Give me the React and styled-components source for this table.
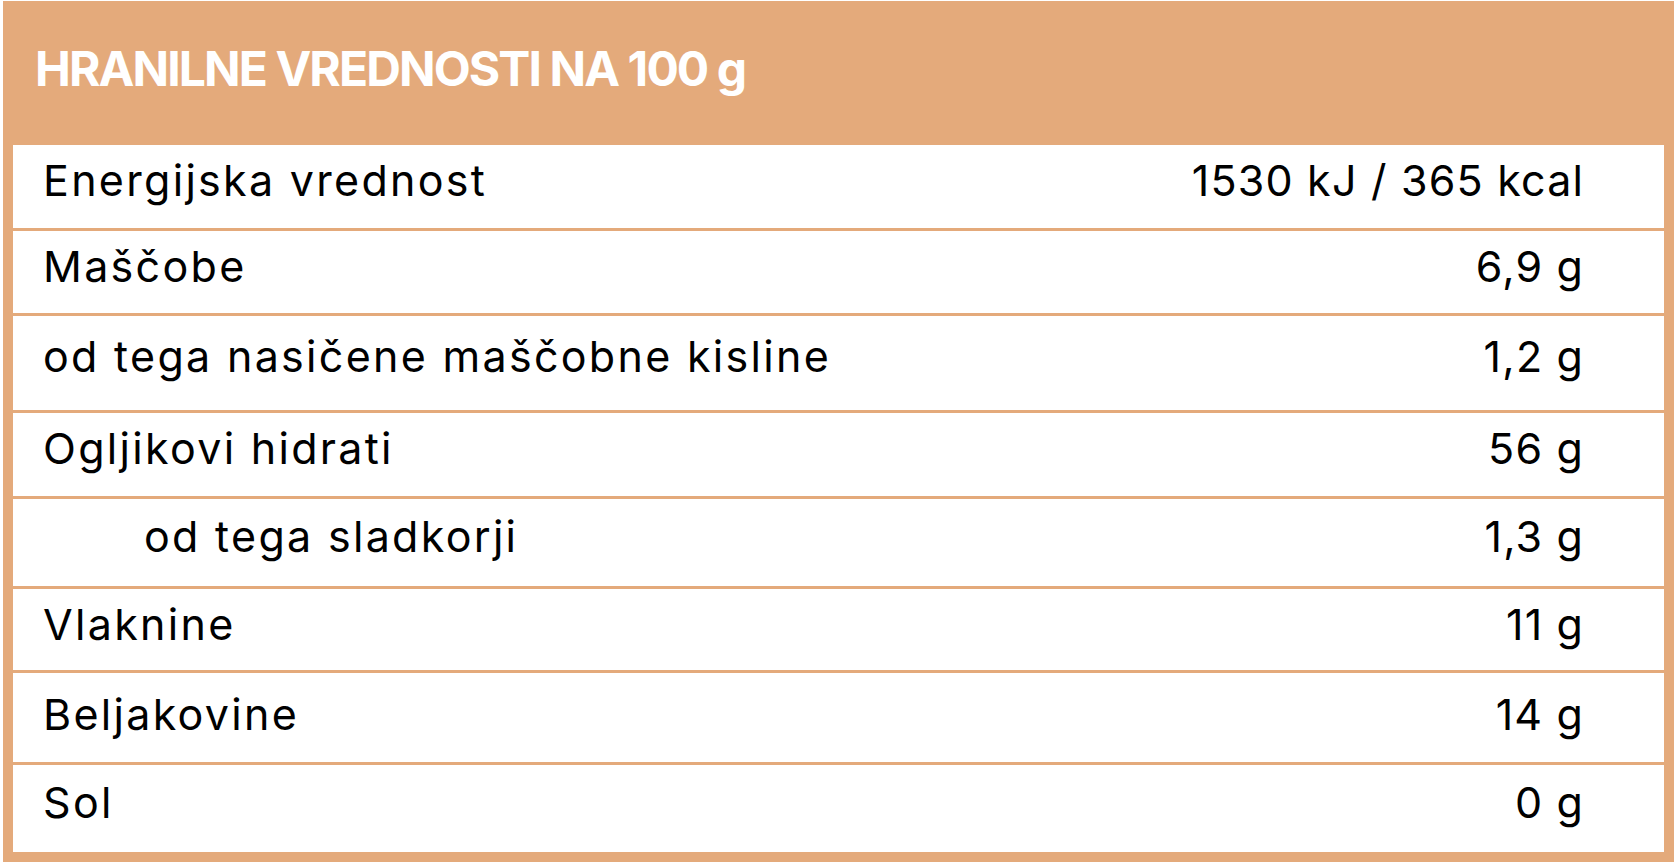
import React from "react";
import styled, { createGlobalStyle } from "styled-components";

const Global = createGlobalStyle`
  html, body { margin: 0; padding: 0; background: #ffffff; }
  body { font-family: Inter, "Open Sans", sans-serif; }
`;

const ORANGE = "#e4aa7b";

const Table = styled.section`
  margin: 1px 0 0 3px;
  width: 1671px;
  box-sizing: border-box;
  background: ${ORANGE};
  padding: 0 10px 10px 10px;
  display: flex;
  flex-direction: column;
  gap: 3px;
`;

const Header = styled.h1`
  margin: 0;
  height: 141px;
  box-sizing: border-box;
  padding: 38px 0 0 22px;
  color: #ffffff;
  font-family: Inter, "Open Sans", sans-serif;
  font-weight: 700;
  font-size: 48px;
  letter-spacing: -1.9px;
  line-height: 60px;
  white-space: nowrap;
`;

const Row = styled.div`
  height: ${(p) => p.$h}px;
  background: #ffffff;
  display: flex;
  align-items: center;
  justify-content: space-between;
  padding: 0 81px ${(p) => p.$pb}px ${(p) => (p.$indent ? 131 : 30)}px;
  box-sizing: border-box;
  font-family: Inter, "Open Sans", sans-serif;
  font-size: 43px;
  font-weight: 400;
  color: #000000;
`;

const Label = styled.span`
  letter-spacing: 2.3px;
`;

const Value = styled.span`
  letter-spacing: 1.2px;
  margin-right: -1.2px;
`;

const rows = [
  { label: "Energijska vrednost", value: "1530 kJ / 365 kcal", h: 83, pb: 13 },
  { label: "Maščobe", value: "6,9 g", h: 82, pb: 13 },
  { label: "od tega nasičene maščobne kisline", value: "1,2 g", h: 94, pb: 14 },
  { label: "Ogljikovi hidrati", value: "56 g", h: 83, pb: 13 },
  { label: "od tega sladkorji", value: "1,3 g", h: 87, pb: 13, indent: true },
  { label: "Vlaknine", value: "11 g", h: 81, pb: 12 },
  { label: "Beljakovine", value: "14 g", h: 89, pb: 8 },
  { label: "Sol", value: "0 g", h: 87, pb: 13 },
];

export default function App() {
  return (
    <>
      <Global />
      <Table>
        <Header>HRANILNE VREDNOSTI NA 100 g</Header>
        {rows.map((r) => (
          <Row key={r.label} $h={r.h} $pb={r.pb} $indent={r.indent}>
            <Label>{r.label}</Label>
            <Value>{r.value}</Value>
          </Row>
        ))}
      </Table>
    </>
  );
}
